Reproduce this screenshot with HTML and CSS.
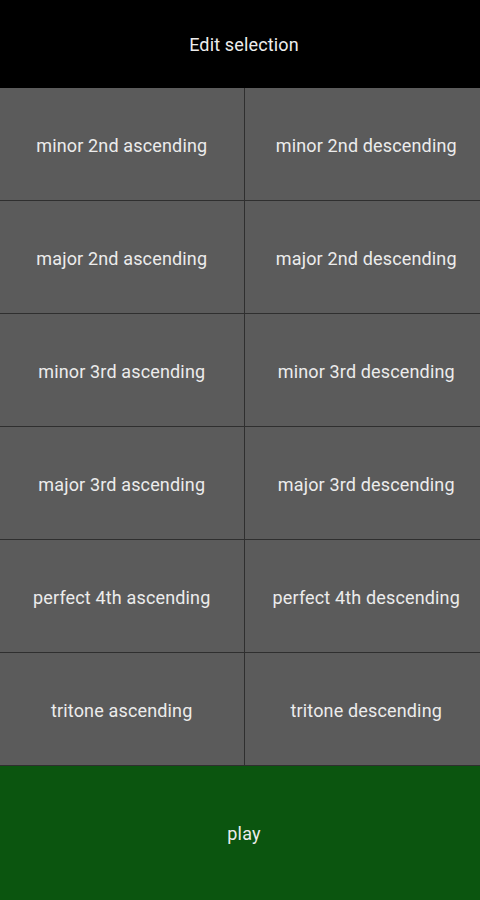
FILE: index.html
```html
<!DOCTYPE html>
<html lang="en">
<head>
    <meta charset="UTF-8">
    <meta name="viewport" content="width=device-width, initial-scale=1.0">
    <title>Edit selection</title>
    <link rel="stylesheet" href="styles.css">
</head>
<body>
    <div class="app">
        <header class="top-bar">Edit selection</header>
        <div class="interval-grid">
            <button class="interval">minor 2nd ascending</button>
            <button class="interval">minor 2nd descending</button>
            <button class="interval">major 2nd ascending</button>
            <button class="interval">major 2nd descending</button>
            <button class="interval">minor 3rd ascending</button>
            <button class="interval">minor 3rd descending</button>
            <button class="interval">major 3rd ascending</button>
            <button class="interval">major 3rd descending</button>
            <button class="interval">perfect 4th ascending</button>
            <button class="interval">perfect 4th descending</button>
            <button class="interval">tritone ascending</button>
            <button class="interval">tritone descending</button>
        </div>
        <button class="play-btn">play</button>
    </div>
</body>
</html>
```

FILE: styles.css
```css
* {
    margin: 0;
    padding: 0;
    box-sizing: border-box;
}
body {
    font-family: Roboto, 'Noto Sans', sans-serif;
    background: #000;
    color: #ececec;
    overflow: hidden;
}
.app {
    display: flex;
    flex-direction: column;
    width: 488px;
    height: 900px;
}
.top-bar {
    height: 88px;
    display: flex;
    align-items: center;
    justify-content: center;
    font-size: 18px;
    letter-spacing: 0.15px;
    color: #ededed;
    background: #000;
}
.interval-grid {
    display: grid;
    grid-template-columns: 1fr 1fr;
    grid-auto-rows: 112px;
    gap: 1px;
    background: #2f2f2f;
}
.interval {
    border: none;
    padding-top: 2px;
    background: #5b5b5b;
    color: #ececec;
    font-family: inherit;
    font-size: 18px;
    letter-spacing: 0.15px;
    cursor: pointer;
}
.play-btn {
    flex: 1;
    border: none;
    border-top: 1px solid #2f2f2f;
    padding-top: 1px;
    background: #0b550f;
    color: #ececec;
    font-family: inherit;
    font-size: 18px;
    letter-spacing: 0.15px;
    cursor: pointer;
}
```
